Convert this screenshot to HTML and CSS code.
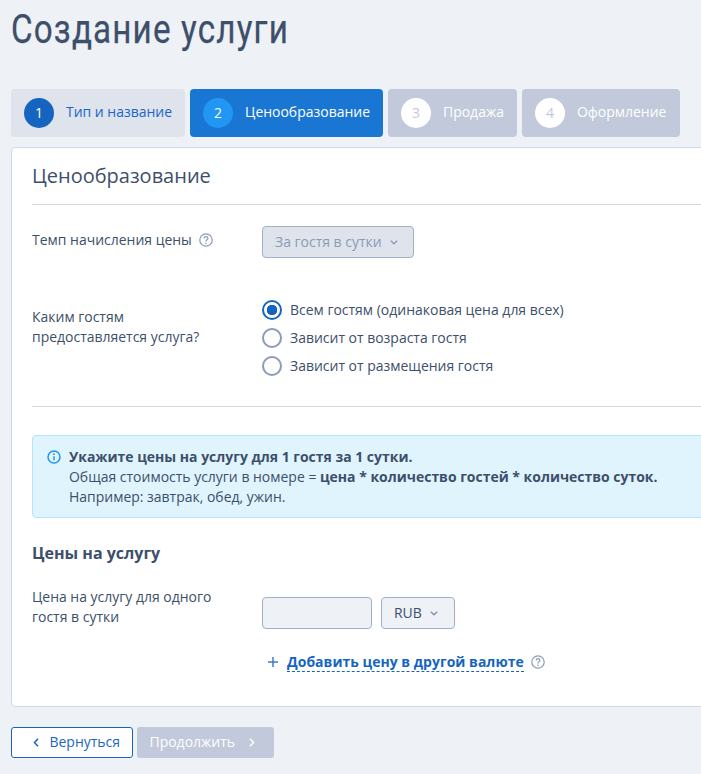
FILE: index.html
```html
<!DOCTYPE html>
<html lang="ru">
<head>
    <meta charset="UTF-8">
    <title>Создание услуги</title>
    <link rel="stylesheet" href="styles.css">
</head>
<body>
    <h1 class="page-title"><span class="page-title-text">Создание услуги</span></h1>

    <div class="steps">
        <div class="step step-done"><span class="step-num">1</span><span class="step-name">Тип и название</span></div>
        <div class="step step-active"><span class="step-num">2</span><span class="step-name">Ценообразование</span></div>
        <div class="step step-todo"><span class="step-num">3</span><span class="step-name">Продажа</span></div>
        <div class="step step-todo"><span class="step-num">4</span><span class="step-name">Оформление</span></div>
    </div>

    <div class="card">
        <h2 class="card-title">Ценообразование</h2>

        <div class="row row-rate">
            <div class="row-label">Темп начисления цены
                <svg class="help" width="14" height="14" viewBox="0 0 14 14"><circle cx="7" cy="7" r="6.2" fill="none" stroke="#8a9bb5" stroke-width="1.2"/><path d="M5.1 5.5c0-1.1.9-1.8 1.9-1.8s1.9.7 1.900 1.700c0 1.400-1.900 1.400-1.900 3" fill="none" stroke="#8a9bb5" stroke-width="1.2"/><circle cx="7" cy="10.3" r=".8" fill="#8a9bb5"/></svg>
            </div>
            <div class="select select-disabled">За гостя в сутки
                <svg class="chevron" width="8" height="5" viewBox="0 0 8 5"><path d="M.8.8 4 3.800 7.200.8" fill="none" stroke="#8a9bb5" stroke-width="1.300"/></svg>
            </div>
        </div>

        <div class="row row-guests">
            <div class="row-label row-label-guests">Каким гостям<br>предоставляется услуга?</div>
            <div class="radios">
                <div class="radio-row"><span class="radio radio-on"></span>Всем гостям (одинаковая цена для всех)</div>
                <div class="radio-row"><span class="radio"></span>Зависит от возраста гостя</div>
                <div class="radio-row"><span class="radio"></span>Зависит от размещения гостя</div>
            </div>
        </div>

        <div class="note">
            <svg class="note-icon" width="14" height="14" viewBox="0 0 14 14"><circle cx="7" cy="7" r="6" fill="none" stroke="#2196f3" stroke-width="1.500"/><path d="M7 6.200v4" stroke="#2196f3" stroke-width="1.500"/><circle cx="7" cy="4.200" r=".9" fill="#2196f3"/></svg>
            <div>
                <b>Укажите цены на услугу для 1 гостя за 1 сутки.</b><br>
                Общая стоимость услуги в номере = <b>цена * количество гостей * количество суток.</b><br>
                Например: завтрак, обед, ужин.
            </div>
        </div>

        <h3 class="section-title">Цены на услугу</h3>

        <div class="row row-price">
            <div class="row-label">Цена на услугу для одного<br>гостя в сутки</div>
            <div class="price-inputs">
                <div class="price-input"></div>
                <div class="select select-currency">RUB
                    <svg class="chevron" width="8" height="5" viewBox="0 0 8 5"><path d="M.8.8 4 3.800 7.200.8" fill="none" stroke="#7f90ab" stroke-width="1.300"/></svg>
                </div>
            </div>
        </div>

        <div class="add-currency">
            <svg class="plus" width="10" height="10" viewBox="0 0 10 10"><path d="M5 0v10M0 5h10" stroke="#3d7cc9" stroke-width="1.500"/></svg>
            <span class="add-link">Добавить цену в другой валюте</span>
            <svg class="help" width="14" height="14" viewBox="0 0 14 14"><circle cx="7" cy="7" r="6.200" fill="none" stroke="#8a9bb5" stroke-width="1.200"/><path d="M5.100 5.500c0-1.100.9-1.800 1.900-1.800s1.900.7 1.900 1.700c0 1.400-1.900 1.400-1.900 3" fill="none" stroke="#8a9bb5" stroke-width="1.200"/><circle cx="7" cy="10.300" r=".8" fill="#8a9bb5"/></svg>
        </div>
    </div>

    <div class="actions">
        <div class="btn btn-back">
            <svg width="6" height="9" viewBox="0 0 6 9"><path d="M5 .8 1.500 4.500 5 8.200" fill="none" stroke="#1565c0" stroke-width="1.500"/></svg>
            <span class="btn-text">Вернуться</span>
        </div>
        <div class="btn btn-next">
            <span class="btn-text">Продолжить</span>
            <svg width="6" height="9" viewBox="0 0 6 9"><path d="M1 .8 4.500 4.500 1 8.200" fill="none" stroke="#fff" stroke-width="1.500"/></svg>
        </div>
    </div>
</body>
</html>
```

FILE: styles.css
```css
html, body {
    height: 100%;
    overflow: hidden;
}

body {
    margin: 0;
    padding: 0 0 0 11px;
    background-color: #eef1f5;
    font-family: "Open Sans", sans-serif;
    font-size: 13.97px;
    line-height: 20px;
    color: #3d4f6a;
}

.page-title {
    margin: 0;
    padding-top: 7px;
    height: 89px;
    box-sizing: border-box;
    font-family: Roboto, sans-serif;
    font-size: 40px;
    line-height: 46px;
    font-weight: 400;
    color: #3d4f6a;
}

.page-title-text {
    display: inline-block;
    transform: scaleX(0.83);
    transform-origin: left center;
    letter-spacing: 1.4px;
    -webkit-text-stroke: 0.25px #3d4f6a;
}

.steps {
    display: flex;
    gap: 5px;
}

.step {
    display: flex;
    align-items: center;
    height: 48px;
    padding: 0 13px;
    border-radius: 4px;
    white-space: nowrap;
}

.step:last-child {
    padding-right: 14px;
}

.step-name {
    margin-bottom: 2px;
}

.step-num {
    display: flex;
    align-items: center;
    justify-content: center;
    width: 30px;
    height: 30px;
    margin-right: 12px;
    border-radius: 50%;
}

.step-done {
    background-color: #dfe3ec;
    color: #1a66c5;
}

.step-done .step-num {
    background-color: #1565c0;
    color: #fff;
}

.step-active {
    background-color: #1976d2;
    color: #fff;
}

.step-active .step-num {
    background-color: #2196f3;
}

.step-todo {
    background-color: #c1c9da;
    color: #fff;
}

.step-todo .step-num {
    background-color: #fff;
    color: #c1c9da;
}

.card {
    width: 740px;
    height: 560px;
    box-sizing: border-box;
    margin-top: 10px;
    padding: 0 20px;
    background-color: #fff;
    border: 1px solid #d3d9e4;
    border-radius: 4px;
}

.card-title {
    margin: 0;
    padding-top: 13px;
    height: 57px;
    box-sizing: border-box;
    border-bottom: 1px solid #d3d9e4;
    font-size: 20px;
    line-height: 30px;
    font-weight: 400;
}

.row {
    display: flex;
}

.row-label {
    width: 230px;
    flex-shrink: 0;
}

.row-rate {
    padding-top: 21px;
    height: 68px;
}

.row-rate .row-label {
    padding-top: 4px;
}

.help {
    margin-left: 4px;
    vertical-align: -2px;
}

.select {
    display: flex;
    align-items: center;
    gap: 8px;
    height: 32px;
    box-sizing: border-box;
    padding: 0 16px 0 12px;
    border: 1px solid #9fb0c8;
    border-radius: 4px;
}

.select-disabled {
    padding-right: 15px;
    background-color: #dfe3ec;
    color: #8a9bb5;
}

.select-currency {
    background-color: #eef1f5;
    margin-left: 9px;
}

.row-guests {
    padding-top: 6px;
    height: 106px;
    border-bottom: 1px solid #d3d9e4;
    width: 100%;
}

.row-label-guests {
    padding-top: 7px;
}

.radios {
    display: flex;
    flex-direction: column;
    gap: 8px;
}

.radio-row {
    display: flex;
    align-items: center;
    height: 20px;
}

.radio {
    width: 20px;
    height: 20px;
    box-sizing: border-box;
    margin-right: 8px;
    border: 2px solid #8a9bb5;
    border-radius: 50%;
    background-color: #fff;
}

.radio-on {
    border-color: #1565c0;
    background: radial-gradient(circle, #1565c0 0, #1565c0 5px, #fff 5.500px);
}

.note {
    display: flex;
    gap: 8px;
    margin-top: 28px;
    padding: 11px 14px;
    height: 83px;
    box-sizing: border-box;
    background-color: #e0f4fe;
    border: 1px solid #b3e5fc;
    border-radius: 4px;
}

.note-icon {
    flex-shrink: 0;
    margin-top: 3px;
}

.note b {
    font-weight: 700;
}

.section-title {
    margin: 0;
    padding-top: 24px;
    height: 68px;
    box-sizing: border-box;
    font-size: 16px;
    line-height: 22px;
    font-weight: 700;
}

.row-price {
    height: 59px;
}

.row-price .row-label {
    padding-top: 1px;
}

.price-inputs {
    display: flex;
    margin-top: 11px;
    height: 32px;
}

.price-input {
    width: 110px;
    height: 32px;
    box-sizing: border-box;
    background-color: #eef1f5;
    border: 1px solid #9fb0c8;
    border-radius: 4px;
}

.add-currency {
    display: flex;
    align-items: center;
    margin-left: 236px;
    margin-top: 5px;
    height: 24px;
}

.plus {
    margin-right: 9px;
}

.add-link {
    font-weight: 700;
    letter-spacing: 0.03px;
    color: #1565c0;
    border-bottom: 1px dashed #1565c0;
    line-height: 19px;
}

.add-currency .help {
    margin-left: 7px;
}

.actions {
    display: flex;
    gap: 4px;
    margin-top: 20px;
}

.btn {
    display: flex;
    align-items: center;
    height: 31px;
    box-sizing: border-box;
    border-radius: 3px;
}

.btn-text {
    margin-bottom: 2px;
}

.btn-back {
    gap: 10.500px;
    width: 122px;
    padding-left: 21px;
    background-color: #fff;
    border: 1px solid #1565c0;
    color: #1a66c5;
}

.btn-next {
    gap: 13.500px;
    width: 137px;
    padding-left: 12.500px;
    background-color: #c1c9da;
    color: #fff;
}
```
